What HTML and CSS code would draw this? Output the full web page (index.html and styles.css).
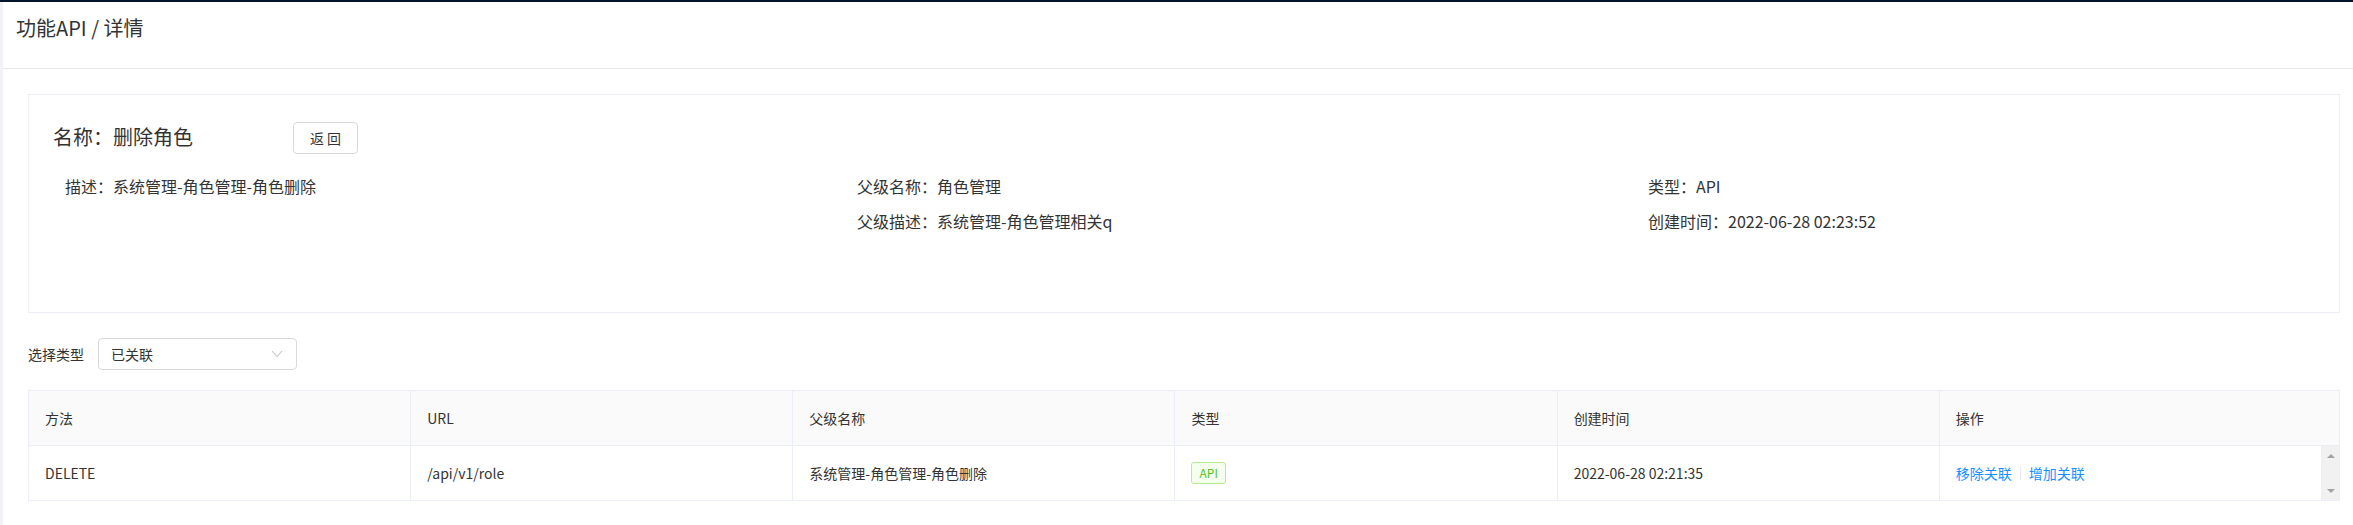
FILE: index.html
```html
<!DOCTYPE html>
<html lang="zh-CN">
<head>
  <meta charset="UTF-8" />
  <meta name="viewport" content="width=device-width, initial-scale=1.0"/>
  <title>功能API详情</title>
  <link rel="stylesheet" href="styles.css">
</head>
<body>
  <div class="topbar"></div>
  <div class="layout">
    <div class="side"></div>
    <div class="main">
      <div class="page-header">功能API / 详情</div>

      <div class="content">
        <div class="card">
          <div class="name-row">
            <div class="name">名称：删除角色</div>
            <button class="button">返 回</button>
          </div>
          <div class="info">
            <div class="info-col">
              <div>描述：系统管理-角色管理-角色删除</div>
            </div>
            <div class="info-col">
              <div>父级名称：角色管理</div>
              <div>父级描述：系统管理-角色管理相关q</div>
            </div>
            <div class="info-col">
              <div>类型：API</div>
              <div>创建时间：2022-06-28 02:23:52</div>
            </div>
          </div>
        </div>

        <div class="filter">
          <span class="filter-label">选择类型</span>
          <div class="select">
            <span>已关联</span>
            <svg class="arrow" width="12" height="8" viewBox="0 0 12 8">
              <polyline points="1,1 6,6.5 11,1" fill="none" stroke="#c0c4cc" stroke-width="1.1"/>
            </svg>
          </div>
        </div>

        <div class="table">
          <div class="thead">
            <div class="cell">方法</div>
            <div class="cell">URL</div>
            <div class="cell">父级名称</div>
            <div class="cell">类型</div>
            <div class="cell">创建时间</div>
            <div class="cell">操作</div>
          </div>
          <div class="tbody">
            <div class="trow">
              <div class="cell">DELETE</div>
              <div class="cell">/api/v1/role</div>
              <div class="cell">系统管理-角色管理-角色删除</div>
              <div class="cell"><span class="tag">API</span></div>
              <div class="cell">2022-06-28 02:21:35</div>
              <div class="cell">
                <a class="link" href="#">移除关联</a>
                <span class="divider"></span>
                <a class="link" href="#">增加关联</a>
              </div>
            </div>
            <div class="scrollbar">
              <span class="up"></span>
              <span class="down"></span>
            </div>
          </div>
        </div>
      </div>
    </div>
  </div>
</body>
</html>
```

FILE: styles.css
```css
* { box-sizing: border-box; }
body {
  margin: 0;
  height: 100vh;
  background-color: #fff;
  font-family: "Noto Sans CJK SC", "Liberation Sans", sans-serif;
  font-size: 14px;
  color: #333;
  display: flex;
  flex-direction: column;
  overflow: hidden;
}
.topbar { height: 2px; background-color: #001529; }
.layout { flex: 1; display: flex; }
.side { width: 3px; background-color: #f0f2f5; }
.main { flex: 1; min-width: 0; background-color: #fff; }

.page-header {
  height: 67px;
  padding: 12px 13px 0;
  border-bottom: 1px solid #e8e8e8;
  font-size: 20px;
  line-height: 28px;
  color: #333;
}

.content { padding: 25px 13px 0 25px; }

.card {
  height: 219px;
  border: 1px solid #ebeef5;
  padding: 27px 24px 0;
}
.name-row {
  display: flex;
  align-items: center;
  height: 32px;
}
.name {
  width: 240px;
  font-size: 20px;
  line-height: 28px;
  margin-top: -3px;
}
.button {
  width: 65px;
  height: 32px;
  padding: 0;
  background-color: #fff;
  border: 1px solid #d9d9d9;
  border-radius: 4px;
  font-family: inherit;
  font-size: 14px;
  color: #333;
  cursor: pointer;
}
.info {
  display: grid;
  grid-template-columns: 792px 791px 1fr;
  margin: 20px 0 0 12px;
  font-size: 16px;
  line-height: 24px;
}
.info-col {
  display: flex;
  flex-direction: column;
  gap: 11px;
}

.filter {
  display: flex;
  align-items: center;
  gap: 14px;
  margin-top: 25px;
}
.filter-label { font-size: 14px; line-height: 20px; }
.select {
  width: 199px;
  height: 32px;
  border: 1px solid #d9d9d9;
  border-radius: 4px;
  padding: 0 12px;
  display: flex;
  align-items: center;
  justify-content: space-between;
  font-size: 14px;
}
.arrow { margin-right: 1px; }

.table {
  margin-top: 20px;
  border: 1px solid #ebeef5;
  border-bottom: none;
}
.thead {
  display: grid;
  grid-template-columns: repeat(5, calc((100% - 17px) / 6)) 1fr;
  background-color: #fafafa;
  border-bottom: 1px solid #ebeef5;
}
.tbody { display: flex; border-bottom: 1px solid #ebeef5; }
.trow {
  flex: 1;
  min-width: 0;
  display: grid;
  grid-template-columns: repeat(6, minmax(0, 1fr));
}
.cell {
  height: 54px;
  padding: 0 16px;
  display: flex;
  align-items: center;
  border-right: 1px solid #ebeef5;
  font-size: 14px;
  color: #333;
  white-space: nowrap;
  min-width: 0;
}
.thead .cell:last-child { border-right: none; }
.tag {
  display: inline-block;
  height: 22px;
  line-height: 20px;
  padding: 0 7px;
  font-size: 12px;
  color: #52c41a;
  background-color: #f6ffed;
  border: 1px solid #b7eb8f;
  border-radius: 3px;
}
.link { color: #1890ff; text-decoration: none; }
.divider {
  display: inline-block;
  width: 1px;
  height: 14px;
  margin: 0 8px;
  background-color: #e8e8e8;
}

.scrollbar {
  width: 17px;
  background-color: #f1f1f1;
  display: flex;
  flex-direction: column;
  justify-content: space-between;
  align-items: center;
  padding: 8px 0 7px;
}
.up {
  width: 0; height: 0;
  border-left: 4px solid transparent;
  border-right: 4px solid transparent;
  border-bottom: 4px solid #a3a3a3;
}
.down {
  width: 0; height: 0;
  border-left: 4px solid transparent;
  border-right: 4px solid transparent;
  border-top: 4px solid #a3a3a3;
}
```
